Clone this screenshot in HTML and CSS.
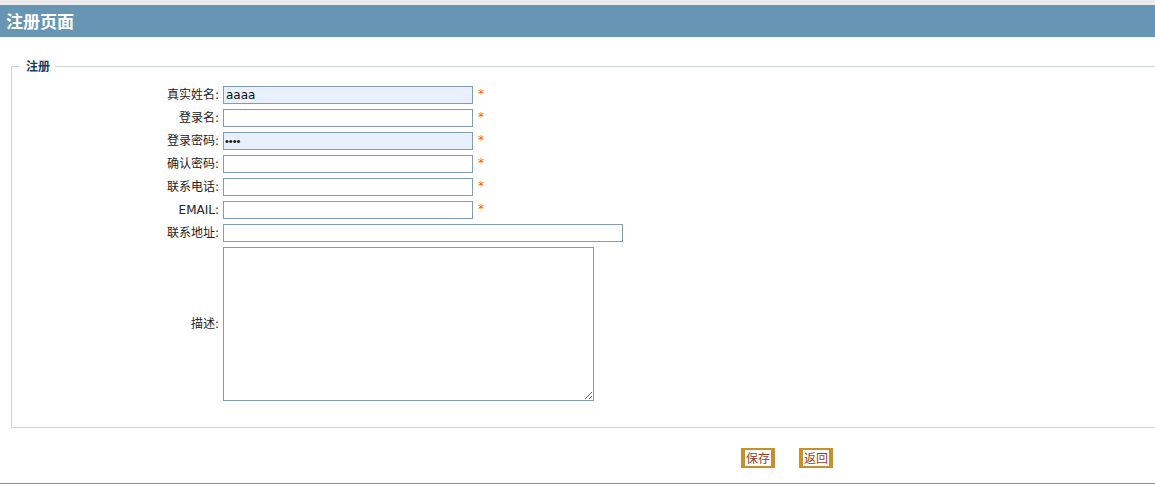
FILE: index.html
```html
<!DOCTYPE html>
<html lang="zh-CN">
<head>
  <meta charset="UTF-8" />
  <title>注册页面</title>
  <link rel="stylesheet" href="styles.css">
</head>
<body>

  <div class="topstrip"></div>
  <div class="titlebar">注册页面</div>

  <form class="regform">
    <fieldset class="box">
      <legend>注册</legend>

      <div class="rows">
        <label class="lbl">真实姓名:</label>
        <div class="fld"><input type="text" class="txt filled" value="aaaa"><span class="req">*</span></div>

        <label class="lbl">登录名:</label>
        <div class="fld"><input type="text" class="txt"><span class="req">*</span></div>

        <label class="lbl">登录密码:</label>
        <div class="fld"><input type="password" class="txt pwd filled" value="aaaa"><span class="req">*</span></div>

        <label class="lbl">确认密码:</label>
        <div class="fld"><input type="password" class="txt pwd"><span class="req">*</span></div>

        <label class="lbl">联系电话:</label>
        <div class="fld"><input type="text" class="txt"><span class="req">*</span></div>

        <label class="lbl">EMAIL:</label>
        <div class="fld"><input type="text" class="txt"><span class="req">*</span></div>

        <label class="lbl">联系地址:</label>
        <div class="fld"><input type="text" class="txt wide"></div>

        <label class="lbl">描述:</label>
        <div class="fld"><textarea class="desc"></textarea></div>
      </div>
    </fieldset>

    <div class="actions">
      <button type="button" class="btn">保存</button>
      <button type="button" class="btn">返回</button>
    </div>
  </form>

  <div class="bottomline"></div>

</body>
</html>
```

FILE: styles.css
```css
html {
  overflow: hidden;
}
body {
  margin: 0;
  font-family: "DejaVu Sans", "Noto Sans CJK SC", sans-serif;
  font-size: 12px;
  color: #222;
  background: #fff;
}
.topstrip {
  height: 5px;
  background: #ebebeb;
}
.titlebar {
  height: 32px;
  line-height: 32px;
  padding-left: 6px;
  background: #6796b5;
  color: #fff;
  font-family: "Noto Sans CJK SC", sans-serif;
  font-size: 17px;
  font-weight: bold;
}
.box {
  margin: 22px -20px 0 11px;
  padding: 13px 0 26px 0;
  border: 1px solid #c9d6e0;
  min-width: 0;
}
.box legend {
  margin-left: 7px;
  padding: 0 5px 0 7px;
  line-height: 14px;
  font-family: "Noto Sans CJK SC", sans-serif;
  font-size: 12px;
  font-weight: bold;
  color: #173d63;
}
.rows {
  display: grid;
  grid-template-columns: 207px 1fr;
  column-gap: 4px;
  row-gap: 5px;
}
.lbl {
  display: flex;
  align-items: center;
  justify-content: flex-end;
  line-height: 18px;
}
.fld {
  display: flex;
  align-items: flex-start;
}
.txt {
  box-sizing: border-box;
  width: 250px;
  height: 18px;
  margin: 0;
  padding: 0 2px;
  border: 1px solid #7f9db9;
  font-family: "DejaVu Sans", sans-serif;
  font-size: 12px;
  color: #111;
  background: #fff;
  outline: none;
}
.txt.pwd {
  font-family: "Liberation Sans", sans-serif;
  font-size: 11px;
  padding-left: 1px;
}
.txt.filled {
  background: #e8f0fe;
}
.txt.wide {
  width: 400px;
}
.desc {
  box-sizing: border-box;
  width: 371px;
  height: 154px;
  margin: 0;
  border: 1px solid #7f9db9;
  font-family: "DejaVu Sans", sans-serif;
  font-size: 12px;
}
.req {
  margin-left: 5px;
  line-height: 16px;
  color: #f25a0f;
  font-size: 12px;
}
.actions {
  display: flex;
  gap: 24px;
  padding-left: 741px;
  margin-top: 20px;
}
.btn {
  box-sizing: border-box;
  width: 34px;
  height: 20px;
  padding: 0;
  border-style: solid;
  border-color: #c8902a;
  border-width: 2px 4px;
  background: #fff;
  color: #9a3b1e;
  font-family: "Noto Sans CJK SC", sans-serif;
  font-size: 12px;
  line-height: 14px;
  cursor: pointer;
}
.bottomline {
  margin-top: 15px;
  border-top: 1px solid #6f93ae;
}
```
